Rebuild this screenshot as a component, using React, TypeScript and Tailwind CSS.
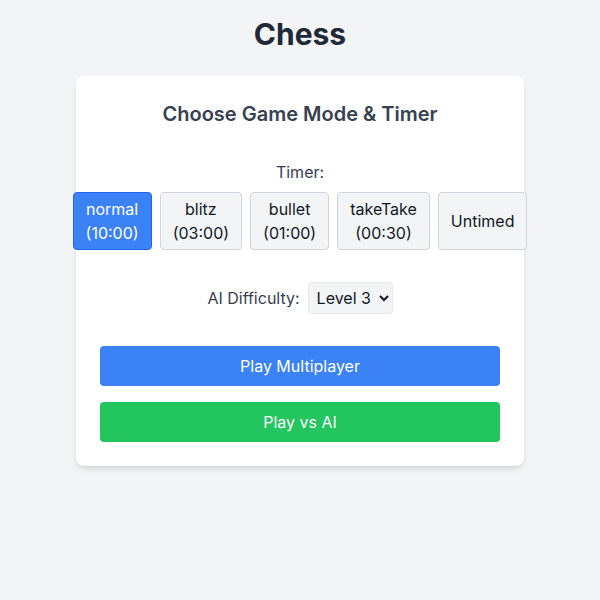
import { useState } from "react";

const timers = [
  { key: "normal", label: "(10:00)" },
  { key: "blitz", label: "(03:00)" },
  { key: "bullet", label: "(01:00)" },
  { key: "takeTake", label: "(00:30)" },
];

const selectedCls =
  "shrink-0 px-3 py-1 rounded border border-[#2563eb] bg-[#3b82f6] text-white";
const idleCls =
  "shrink-0 px-3 py-1 rounded border border-[#d1d5db] bg-[#f3f4f6] text-[#111827]";

const App = () => {
  const [timer, setTimer] = useState<string>("normal");
  const [level, setLevel] = useState<string>("3");

  return (
    <div
      className="min-h-screen bg-[#f3f4f6] p-4 flex flex-col items-center"
      style={{ fontFamily: "Inter, 'Noto Sans', sans-serif" }}
    >
      <h1 className="text-3xl font-bold text-[#1f2937] mb-6">Chess</h1>
      <div className="w-full max-w-md bg-white rounded-lg shadow-md p-6 flex flex-col items-center">
        <h2 className="text-xl font-semibold text-[#374151] mb-8">
          Choose Game Mode &amp; Timer
        </h2>
        <div className="text-[#374151] mb-2">Timer:</div>
        <div className="flex justify-center gap-2 w-full mb-8">
          {timers.map((t) => (
            <button
              key={t.key}
              onClick={() => setTimer(t.key)}
              className={timer === t.key ? selectedCls : idleCls}
            >
              {t.key}
              <br />
              {t.label}
            </button>
          ))}
          <button
            onClick={() => setTimer("untimed")}
            className={timer === "untimed" ? selectedCls : idleCls}
          >
            Untimed
          </button>
        </div>
        <div className="flex items-center gap-2 mb-8">
          <label className="text-[#374151]">AI Difficulty:</label>
          <select
            value={level}
            onChange={(e) => setLevel(e.target.value)}
            className="bg-[#f3f4f6] border border-[#e5e7eb] rounded px-1 py-1 text-[#111827]"
          >
            <option value="1">Level 1</option>
            <option value="2">Level 2</option>
            <option value="3">Level 3</option>
            <option value="4">Level 4</option>
            <option value="5">Level 5</option>
          </select>
        </div>
        <div className="w-full flex flex-col gap-4">
          <button className="w-full h-10 rounded bg-[#3b82f6] text-white">
            Play Multiplayer
          </button>
          <button className="w-full h-10 rounded bg-[#22c55e] text-white">
            Play vs AI
          </button>
        </div>
      </div>
    </div>
  );
};

export default App;
